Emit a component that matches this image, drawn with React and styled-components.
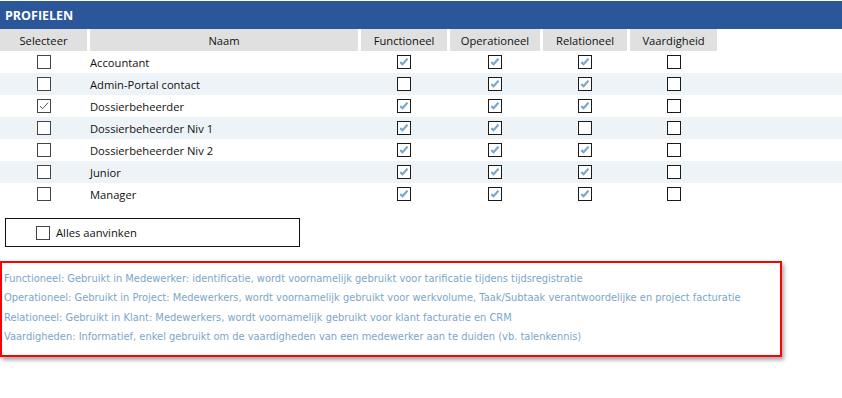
import React from 'react'
import styled, { createGlobalStyle } from 'styled-components'

const GlobalStyle = createGlobalStyle`
  body {
    margin: 0;
    background: #fff;
    font-family: "Segoe UI", "Open Sans", "Noto Sans", sans-serif;
  }
`

const Page = styled.div`
  width: 842px;
  height: 398px;
  padding-top: 1px;
  box-sizing: border-box;
  overflow: hidden;
`

const TitleBar = styled.div`
  height: 28px;
  background: #2b579a;
  color: #fff;
  font-weight: 700;
  font-size: 12.5px;
  display: flex;
  align-items: center;
  padding-left: 5px;
`

const COLS = '87px 268px 86px 90px 84px 87px'

const HeadRow = styled.div`
  display: grid;
  grid-template-columns: ${COLS};
  column-gap: 3px;
  height: 22px;
`

const HeadCell = styled.div`
  background: #e0e0e0;
  font-size: 11.2px;
  color: #111;
  display: flex;
  align-items: center;
  justify-content: center;
`

const Row = styled.div`
  display: grid;
  grid-template-columns: ${COLS};
  column-gap: 3px;
  height: 22px;
  background: ${p => (p.$alt ? '#eef3f7' : '#fff')};
`

const Cell = styled.div`
  display: flex;
  align-items: center;
  justify-content: ${p => (p.$left ? 'flex-start' : 'center')};
  font-size: 11.2px;
  color: #111;
`

const Box = styled.span`
  width: 14px;
  height: 14px;
  box-sizing: border-box;
  border: 1px solid ${p => (p.$soft ? '#444' : '#1a1a1a')};
  background: #fff;
  display: inline-flex;
  align-items: center;
  justify-content: center;
  flex-shrink: 0;
`

const Check = ({ checked, soft }) => (
  <Box $soft={soft}>
    {checked && (soft ? (
      <svg width="12" height="12" viewBox="0 0 12 12">
        <path d="M2 6 L4.6 8.6 L10 2.8" fill="none" stroke="#555" strokeWidth="1" />
      </svg>
    ) : (
      <svg width="12" height="12" viewBox="0 0 12 12">
        <path d="M2.4 6.2 L4.5 8.3 L9.4 2.8" fill="none" stroke="#8c9aa6" strokeWidth="2" />
        <path d="M2.4 6 L4.5 8 L9.4 2.6" fill="none" stroke="#74abd6" strokeWidth="1.6" />
      </svg>
    ))}
  </Box>
)

const AllBox = styled.div`
  margin: 13px 0 0 5px;
  width: 295px;
  height: 29px;
  box-sizing: border-box;
  border: 1px solid #111;
  display: flex;
  align-items: center;
  gap: 6px;
  padding-left: 30px;
  font-size: 11.2px;
  color: #111;
`

const InfoBox = styled.div`
  margin-top: 14px;
  width: 782px;
  height: 96px;
  box-sizing: border-box;
  border: 2px solid #ff0000;
  box-shadow: 2px 3px 4px rgba(0, 0, 0, 0.35);
  padding: 6px 0 0 2px;
  display: flex;
  flex-direction: column;
`

const InfoLine = styled.div`
  font-family: "DejaVu Sans", Verdana, sans-serif;
  font-size: 9.9px;
  line-height: 19.4px;
  color: #7ca6c9;
  white-space: nowrap;
`

const profiles = [
  { name: 'Accountant', sel: false, f: true, o: true, r: true, v: false },
  { name: 'Admin-Portal contact', sel: false, f: false, o: true, r: true, v: false },
  { name: 'Dossierbeheerder', sel: true, f: true, o: true, r: true, v: false },
  { name: 'Dossierbeheerder Niv 1', sel: false, f: true, o: true, r: false, v: false },
  { name: 'Dossierbeheerder Niv 2', sel: false, f: true, o: true, r: true, v: false },
  { name: 'Junior', sel: false, f: true, o: true, r: true, v: false },
  { name: 'Manager', sel: false, f: true, o: true, r: true, v: false },
]

const info = [
  'Functioneel: Gebruikt in Medewerker: identificatie, wordt voornamelijk gebruikt voor tarificatie tijdens tijdsregistratie',
  'Operationeel: Gebruikt in Project: Medewerkers, wordt voornamelijk gebruikt voor werkvolume, Taak/Subtaak verantwoordelijke en project facturatie',
  'Relationeel: Gebruikt in Klant: Medewerkers, wordt voornamelijk gebruikt voor klant facturatie en CRM',
  'Vaardigheden: Informatief, enkel gebruikt om de vaardigheden van een medewerker aan te duiden (vb. talenkennis)',
]

const App = () => (
  <Page>
    <GlobalStyle />
    <TitleBar>PROFIELEN</TitleBar>
    <HeadRow>
      <HeadCell>Selecteer</HeadCell>
      <HeadCell>Naam</HeadCell>
      <HeadCell>Functioneel</HeadCell>
      <HeadCell>Operationeel</HeadCell>
      <HeadCell>Relationeel</HeadCell>
      <HeadCell>Vaardigheid</HeadCell>
    </HeadRow>
    {profiles.map((p, i) => (
      <Row key={p.name} $alt={i % 2 === 1}>
        <Cell><Check checked={p.sel} soft /></Cell>
        <Cell $left>{p.name}</Cell>
        <Cell><Check checked={p.f} /></Cell>
        <Cell><Check checked={p.o} /></Cell>
        <Cell><Check checked={p.r} /></Cell>
        <Cell><Check checked={p.v} /></Cell>
      </Row>
    ))}
    <AllBox>
      <Check soft />
      Alles aanvinken
    </AllBox>
    <InfoBox>
      {info.map(t => <InfoLine key={t}>{t}</InfoLine>)}
    </InfoBox>
  </Page>
)

export default App
